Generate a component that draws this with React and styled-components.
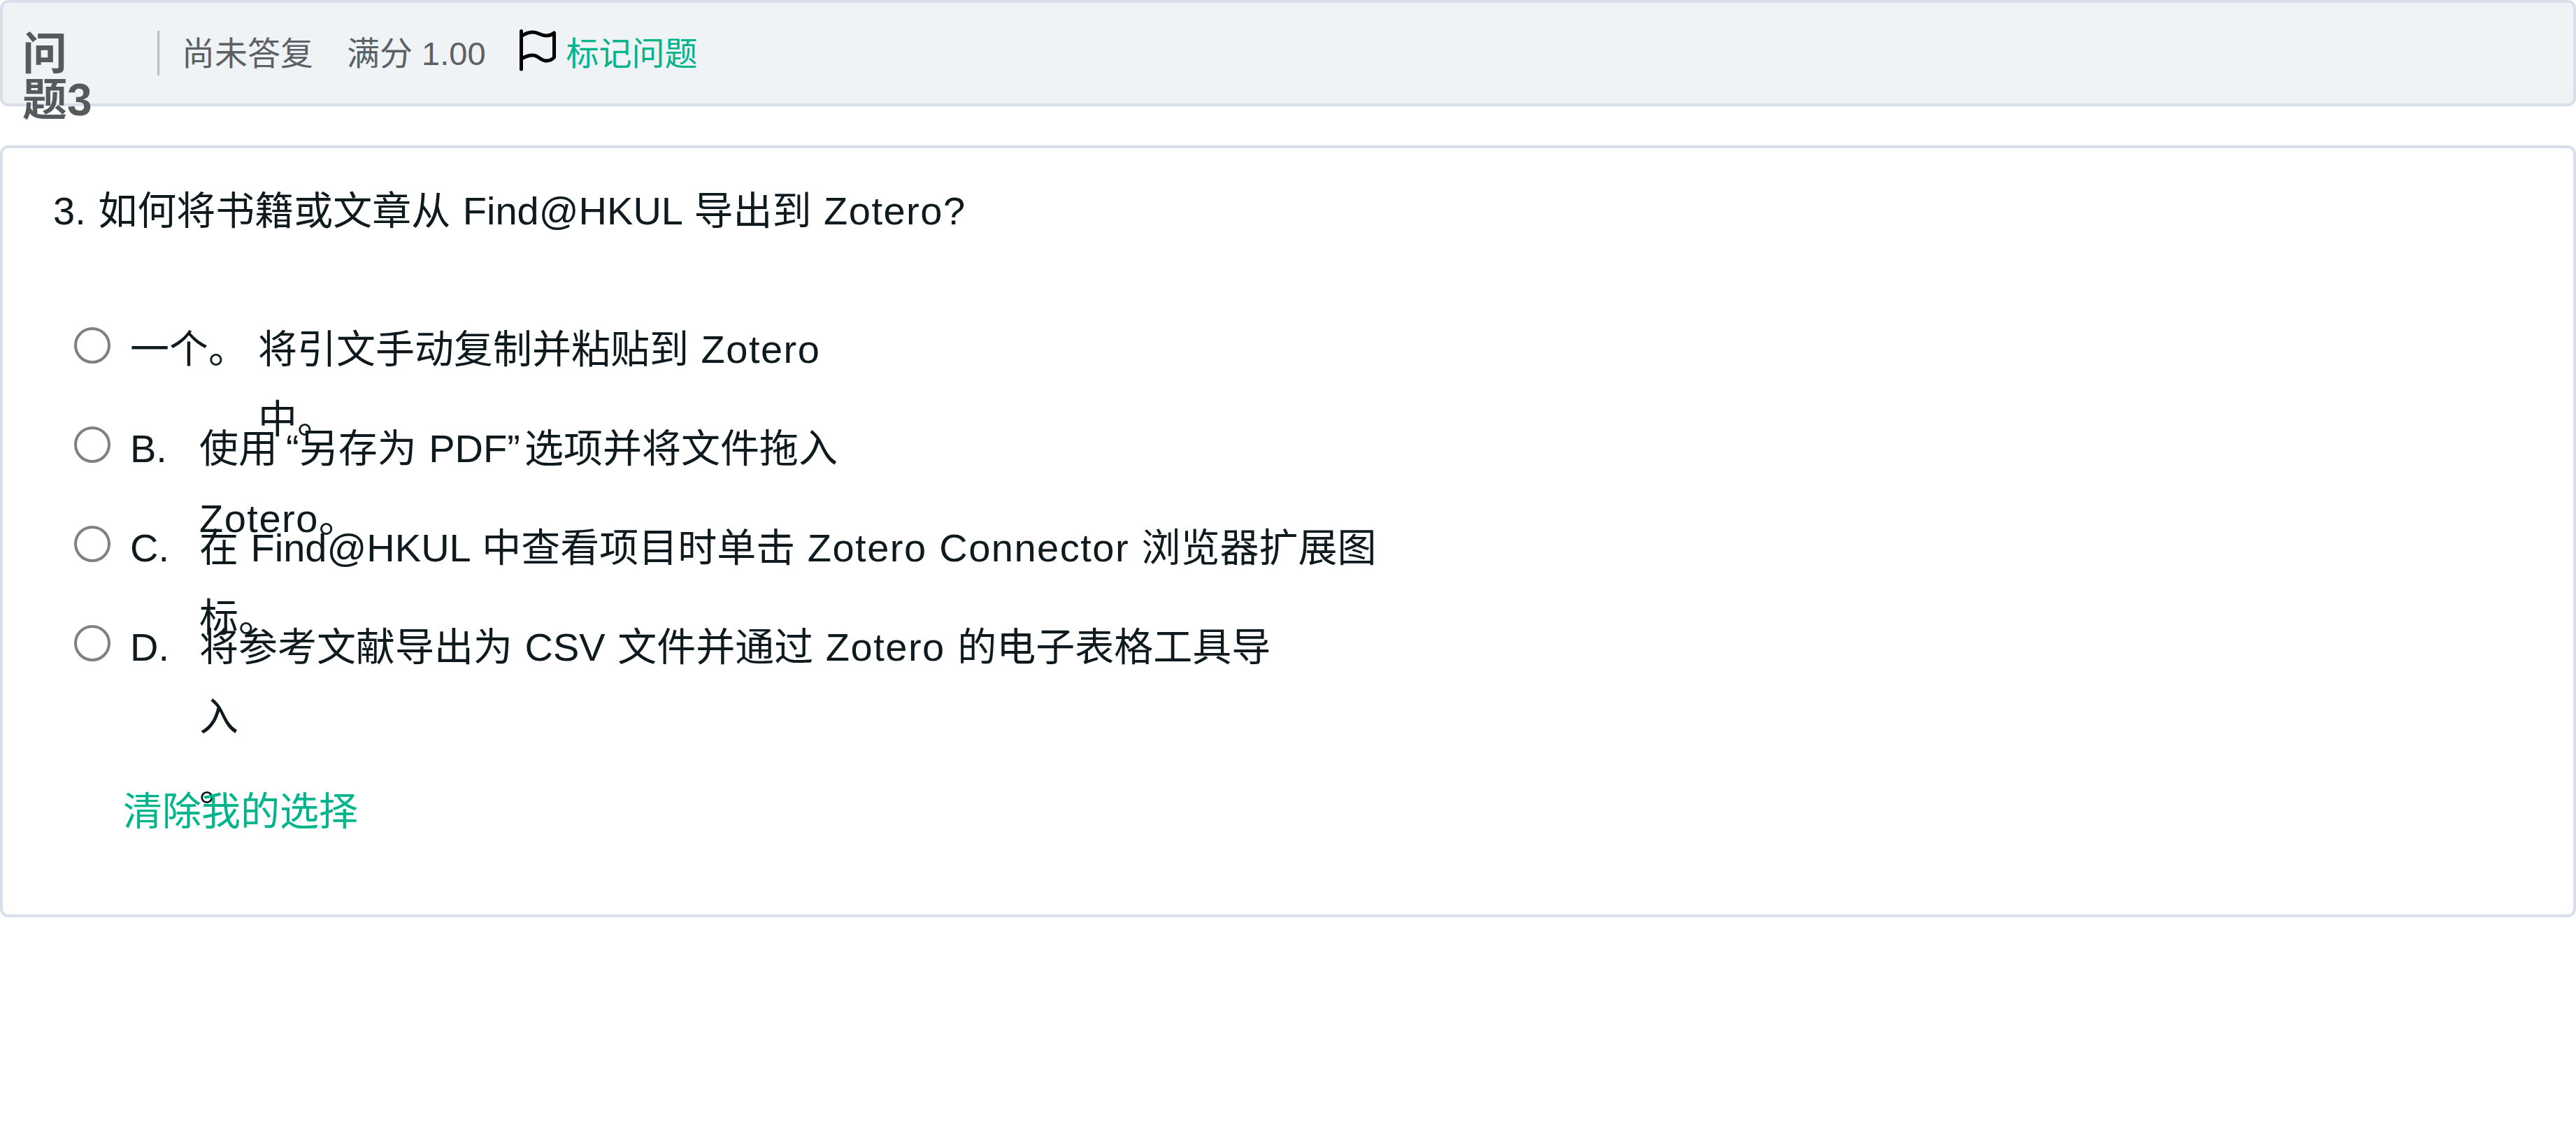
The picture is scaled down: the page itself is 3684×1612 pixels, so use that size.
import React from "react";
import styled, { createGlobalStyle } from "styled-components";

const Global = createGlobalStyle`
  html, body { margin: 0; padding: 0; background: #fff; }
  body { font-family: "Liberation Sans", "Noto Sans CJK SC", sans-serif; }
`;
const Page = styled.div`
  width: 3684px;
  height: 1612px;
  overflow: hidden;
`;
const Header = styled.header`
  box-sizing: border-box;
  height: 152px;
  display: flex;
  align-items: flex-start;
  padding: 40px 0 0 28px;
  background: #f0f3f6;
  border: 4px solid #d8dfea;
  border-radius: 12px;
`;
const Title = styled.h3`
  margin: 0;
  width: 193px;
  flex: none;
  font-size: 64px;
  line-height: 66px;
  font-weight: 700;
  color: #555a5e;
`;
const Meta = styled.div`
  box-sizing: border-box;
  display: flex;
  align-items: center;
  height: 64px;
  padding: 0 0 8px 32px;
  border-left: 3px solid #b9bcbf;
  font-size: 47px;
  color: #5c6166;
  white-space: nowrap;
`;
const MetaItem = styled.span`
  margin-right: 48px;
`;
const FlagLink = styled.span`
  display: flex;
  align-items: center;
  gap: 15px;
  color: #00b48c;
`;
const Card = styled.section`
  box-sizing: border-box;
  margin-top: 56px;
  height: 1104px;
  padding: 40px 72px 0;
  background: #fff;
  border: 4px solid #d8dfea;
  border-radius: 12px;
`;
const Question = styled.p`
  margin: 0 0 98px;
  font-size: 56px;
  line-height: 100px;
  color: #0f1a1f;
  white-space: nowrap;
  word-spacing: 2px;
`;
const Options = styled.div`
  display: flex;
  flex-direction: column;
  padding-left: 30px;
`;
const Option = styled.label`
  display: flex;
  align-items: flex-start;
  height: 142px;
  font-size: 56px;
  line-height: 100px;
  color: #0f1a1f;
  white-space: nowrap;
  word-spacing: 2px;
`;
const Radio = styled.span`
  box-sizing: border-box;
  flex: none;
  width: 52px;
  height: 52px;
  margin: 18px 28px 0 0;
  border: 4px solid #808080;
  border-radius: 50%;
  background: #fff;
`;
const Letter = styled.span`
  flex: none;
  min-width: 84px;
  margin-right: 15px;
`;
const OptionText = styled.span`
  display: block;
`;
const Latin = styled.span`
  letter-spacing: 1.5px;
`;
const Quote = styled.span`
  margin: ${(p) => (p.$open ? "0 0 0 12px" : "0 6px 0 0")};
`;
const Clear = styled.a`
  display: block;
  margin: 93px 0 0 70px;
  font-size: 56px;
  line-height: 100px;
  color: #00b48c;
`;

const Flag = () => (
  <svg width="52" height="60" viewBox="0 0 52 60" fill="none" stroke="#000" strokeWidth="5" strokeLinecap="round" strokeLinejoin="round">
    <path d="M2.5 2.5V57" />
    <path d="M2.5 10C8 6 13 4 19 4C27 4 30 9 38 9C43 9 47 7 49.5 5V40C47 43 43 45 38 45C30 45 27 37 19 37C13 37 8 39 2.5 42" />
  </svg>
);

const Z = () => <Latin>Zotero</Latin>;

const items = [
  ["一个。", <>将引文手动复制并粘贴到 <Z /><br />中。</>],
  ["B.", <>使用<Quote $open>“</Quote>另存为 PDF<Quote>”</Quote>选项并将文件拖入<br /><Z />。</>],
  ["C.", <>在 Find@HKUL 中查看项目时单击 <Z /> <Latin>Connector</Latin> 浏览器扩展图<br />标。</>],
  ["D.", <>将参考文献导出为 CSV 文件并通过 <Z /> 的电子表格工具导<br />入<br />。</>],
];

export default function App() {
  return (
    <Page>
      <Global />
      <Header>
        <Title>问<br />题3</Title>
        <Meta>
          <MetaItem>尚未答复</MetaItem>
          <MetaItem>满分 1.00</MetaItem>
          <FlagLink><Flag />标记问题</FlagLink>
        </Meta>
      </Header>
      <Card>
        <Question>3. 如何将书籍或文章从 Find@HKUL 导出到 <Z />?</Question>
        <Options>
          {items.map(([l, t]) => (
            <Option key={l}>
              <Radio />
              <Letter>{l}</Letter>
              <OptionText>{t}</OptionText>
            </Option>
          ))}
          <Clear>清除我的选择</Clear>
        </Options>
      </Card>
    </Page>
  );
}
